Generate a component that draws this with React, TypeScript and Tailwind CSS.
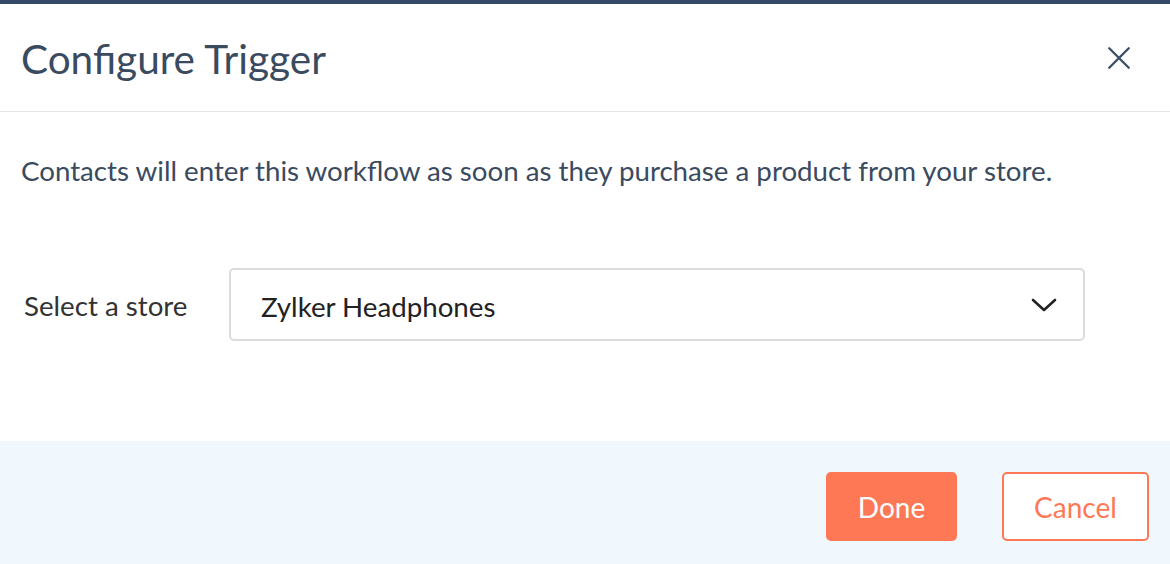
export default function App() {
  return (
    <div className="w-[1170px] h-[564px] bg-white flex flex-col overflow-hidden" style={{ fontFamily: "Lato, 'Open Sans', sans-serif" }}>
      <div className="h-[4px] bg-[#34496a]" />
      <div className="h-[108px] flex items-center justify-between pl-[21px] pr-[38px] border-b border-[#e6e6e6]">
        <h1 className="text-[40.5px] text-[#3a4a5f] leading-none pt-[4px]">Configure Trigger</h1>
        <button className="text-[#3d4f66]">
          <svg width="26" height="26" viewBox="0 0 24 24" fill="none" stroke="currentColor" strokeWidth="2.2" strokeLinecap="round">
            <path d="M3 3L21 21M21 3L3 21" />
          </svg>
        </button>
      </div>
      <div className="flex-1 flex flex-col">
        <p className="text-[27.7px] text-[#3a4a5f] pl-[21px] mt-[43px] leading-[32px]">
          Contacts will enter this workflow as soon as they purchase a product from your store.
        </p>
        <div className="flex items-center mt-[81px] pl-[24px]">
          <span className="w-[205px] text-[27.7px] text-[#333] pt-[2px]">Select a store</span>
          <div className="w-[856px] h-[73px] border-2 border-[#dcdcdc] rounded-[5px] flex items-center justify-between pl-[30px] pr-[26px]">
            <span className="text-[27.7px] text-[#222] pt-[4px]">Zylker Headphones</span>
            <svg width="26" height="16" viewBox="0 0 26 16" fill="none" stroke="#222" strokeWidth="2.6" strokeLinecap="round" strokeLinejoin="round">
              <path d="M2 3L13 13L24 3" />
            </svg>
          </div>
        </div>
      </div>
      <div className="h-[123px] bg-[#f1f8fd] flex justify-end items-start pt-[31px] pr-[21px] gap-[45px]">
        <button className="w-[131px] h-[69px] bg-[#ff7856] rounded-[5px] text-white text-[28px]">Done</button>
        <button className="w-[147px] h-[69px] bg-white border-2 border-[#ff7856] rounded-[5px] text-[#ff7856] text-[28px]">Cancel</button>
      </div>
    </div>
  );
}
